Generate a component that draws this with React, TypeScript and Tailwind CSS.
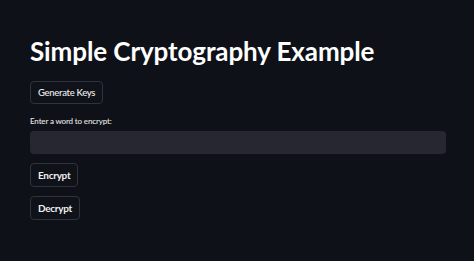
import React from "react";

export default function App() {
  const font = { fontFamily: 'Lato, "Noto Sans", sans-serif' };
  return (
    <div className="w-[474px] h-[261px] bg-[#0e1117] text-[#fafafa] overflow-hidden" style={font}>
      <div className="pl-[30px] pr-[28px] pt-[35px] flex flex-col items-start">
        <h1 className="font-bold text-[26px] leading-[32px] tracking-[-0.1px] text-white">Simple Cryptography Example</h1>
        <button className="mt-[14px] h-[23px] px-[7px] rounded-[4px] border border-[#30333c] bg-[#0f1219] text-[9.5px] font-medium tracking-[-0.3px] leading-none text-[#f0f0f0]">Generate Keys</button>
        <label className="mt-[12px] text-[8px] font-medium tracking-[-0.15px] leading-[10px] text-[#e8e8e8]">Enter a word to encrypt:</label>
        <div className="mt-[5px] h-[23px] rounded-[4px] bg-[#262730] w-[416px]"></div>
        <button className="mt-[9px] h-[24px] px-[7px] rounded-[4px] border border-[#30333c] bg-[#0f1219] text-[10px] font-bold tracking-[-0.3px] leading-none text-[#f0f0f0]">Encrypt</button>
        <button className="mt-[9px] h-[24px] px-[7px] rounded-[4px] border border-[#30333c] bg-[#0f1219] text-[10px] font-bold tracking-[-0.3px] leading-none text-[#f0f0f0]">Decrypt</button>
      </div>
    </div>
  );
}
